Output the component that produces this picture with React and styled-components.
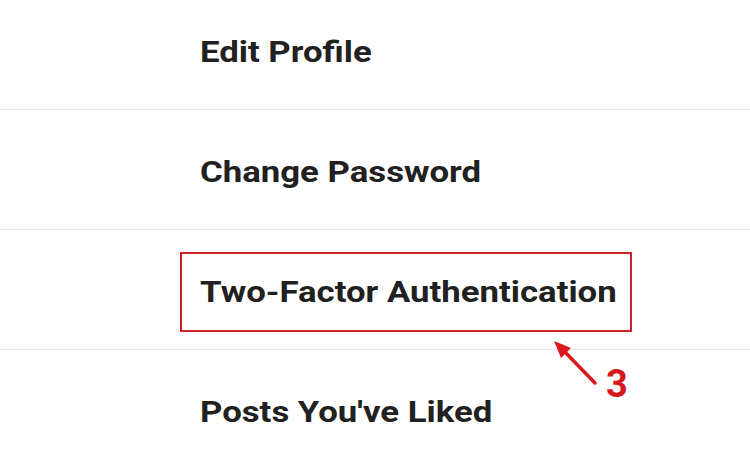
import React from "react";
import styled, { createGlobalStyle } from "styled-components";

const Global = createGlobalStyle`
  html, body { margin: 0; padding: 0; background: #ffffff; }
  body { font-family: Roboto, "Noto Sans", "Liberation Sans", sans-serif; overflow: hidden; }
`;

const Page = styled.div`
  width: 750px;
  height: 466px;
  overflow: hidden;
  background: #ffffff;
`;

const List = styled.ul`
  list-style: none;
  margin: -10px 0 0 0;
  padding: 0;
`;

const Row = styled.li`
  position: relative;
  box-sizing: border-box;
  height: 120px;
  display: flex;
  align-items: center;
  padding: 4px 0 0 200px;
  border-bottom: 1px solid ${(p) => (p.$last ? "transparent" : "#e6e6e6")};
`;

const Label = styled.span`
  display: inline-block;
  font-family: Roboto, "Liberation Sans", sans-serif;
  font-weight: 700;
  font-size: 30px;
  color: #212121;
  white-space: nowrap;
  transform: scaleX(1.158);
  transform-origin: left center;
`;

const Highlight = styled.span`
  display: inline-block;
  margin: -22px -72px -23px -20px;
  padding: 20px 70px 21px 18px;
  border: 2px solid #d4202a;
`;

const ArrowSvg = styled.svg`
  position: absolute;
  left: 550px;
  top: 107px;
  width: 50px;
  height: 50px;
  overflow: visible;
`;

const StepNumber = styled.span`
  position: absolute;
  left: 606px;
  top: 135px;
  font-family: Roboto, "Liberation Sans", sans-serif;
  font-weight: 700;
  font-size: 38px;
  line-height: 1;
  color: #d7191e;
`;

const items = ["Edit Profile", "Change Password", "Two-Factor Authentication", "Posts You've Liked"];

export default function App() {
  return (
    <Page>
      <Global />
      <List>
        {items.map((t, i) => (
          <Row key={t} $last={i === items.length - 1}>
            {i === 2 ? (
              <>
                <Highlight>
                  <Label>{t}</Label>
                </Highlight>
                <ArrowSvg viewBox="0 0 50 50">
                  <line x1="12" y1="12" x2="45" y2="46" stroke="#d7191e" strokeWidth="3.5" strokeLinecap="round" />
                  <polygon points="4,4 21,11 11,21" fill="#d7191e" />
                </ArrowSvg>
                <StepNumber>3</StepNumber>
              </>
            ) : (
              <Label>{t}</Label>
            )}
          </Row>
        ))}
      </List>
    </Page>
  );
}
